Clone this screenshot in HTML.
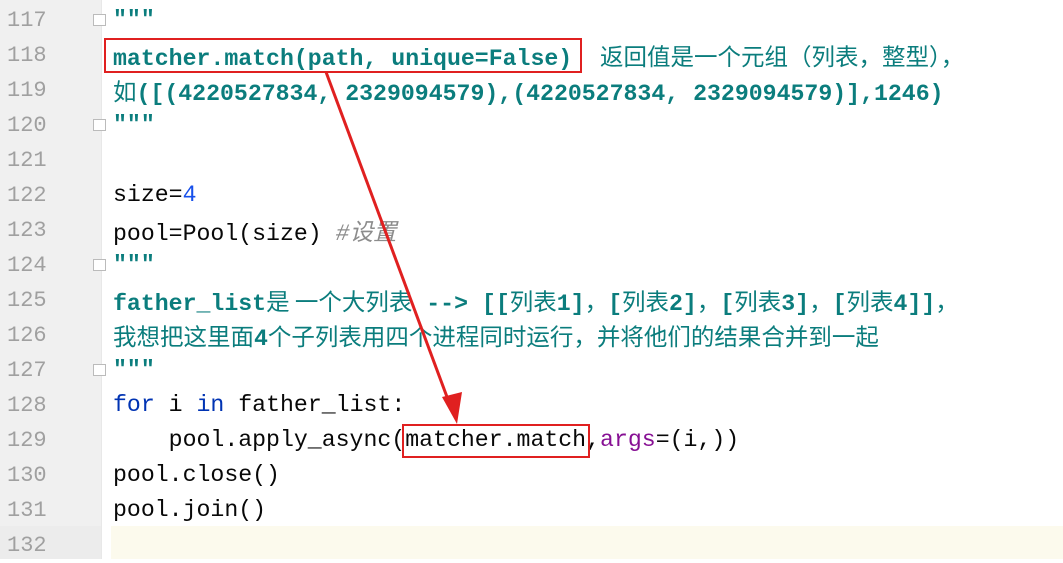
<!DOCTYPE html><html><head><meta charset="utf-8"><style>
body{margin:0;width:1063px;height:559px;overflow:hidden;background:#fff;position:relative;font-family:"Liberation Mono","Noto Sans CJK SC",monospace;}
.g{position:absolute;left:0;top:0;width:101px;height:559px;background:#f0f0f0;border-right:1px solid #e8e8e8;}
.hl{position:absolute;left:111px;top:526px;width:952px;height:33px;background:#fcfaed;}
.gh{position:absolute;left:0;top:526px;width:101px;height:33px;background:#ececec;}
.ln{position:absolute;left:7px;font-size:22px;color:#a0a0a0;height:35px;line-height:35px;margin-top:2px}
.c{position:absolute;left:113px;font-size:23.2px;height:35px;line-height:35px;white-space:pre;color:#080808;margin-top:2px}
.d{color:#0b7d7d;font-weight:bold}
.z{font-family:"Noto Sans CJK SC",sans-serif;font-weight:normal;font-size:23.5px}
.k{color:#0033b3}.n{color:#1750eb}.p{color:#871094}.cm{color:#8c8c8c;font-style:italic}
.f{position:absolute;left:93px;width:11px;height:10px;border:1px solid #bbb;background:#fff;}
.box{position:absolute;border:2px solid #e02020;}
</style></head><body>
<div class="g"></div><div class="gh"></div><div class="hl"></div>
<div class="ln" style="top:1px">117</div><div class="ln" style="top:36px">118</div><div class="ln" style="top:71px">119</div><div class="ln" style="top:106px">120</div><div class="ln" style="top:141px">121</div><div class="ln" style="top:176px">122</div><div class="ln" style="top:211px">123</div><div class="ln" style="top:246px">124</div><div class="ln" style="top:281px">125</div><div class="ln" style="top:316px">126</div><div class="ln" style="top:351px">127</div><div class="ln" style="top:386px">128</div><div class="ln" style="top:421px">129</div><div class="ln" style="top:456px">130</div><div class="ln" style="top:491px">131</div><div class="ln" style="top:526px">132</div>
<div class="f" style="top:14px"></div><div class="f" style="top:119px"></div><div class="f" style="top:259px"></div><div class="f" style="top:364px"></div>
<div class="c d" style="top:1px">"""</div>
<div class="c d" style="top:36px">matcher.match(path, unique=False)  <span class="z">返回值是一个元组（列表，整型），</span></div>
<div class="c d" style="top:71px"><span class="z">如</span>([(4220527834, 2329094579),(4220527834, 2329094579)],1246)</div>
<div class="c d" style="top:106px">"""</div>
<div class="c" style="top:176px">size=<span class="n">4</span></div>
<div class="c" style="top:211px">pool=Pool(size) <span class="cm">#<span class="z" style="font-style:italic">设置</span></span></div>
<div class="c d" style="top:246px">"""</div>
<div class="c d" style="top:281px">father_list<span class="z">是 一个大列表</span> --> [[<span class="z">列表</span>1]<span class="z">，</span>[<span class="z">列表</span>2]<span class="z">，</span>[<span class="z">列表</span>3]<span class="z">，</span>[<span class="z">列表</span>4]]<span class="z">，</span></div>
<div class="c d" style="top:316px"><span class="z">我想把这里面</span>4<span class="z">个子列表用四个进程同时运行，并将他们的结果合并到一起</span></div>
<div class="c d" style="top:351px">"""</div>
<div class="c" style="top:386px"><span class="k">for</span> i <span class="k">in</span> father_list:</div>
<div class="c" style="top:421px">    pool.apply_async(matcher.match,<span class="p">args</span>=(i,))</div>
<div class="c" style="top:456px">pool.close()</div>
<div class="c" style="top:491px">pool.join()</div>
<div class="box" style="left:104px;top:38px;width:474px;height:31px"></div>
<div class="box" style="left:402px;top:424px;width:184px;height:30px"></div>
<svg style="position:absolute;left:0;top:0" width="1063" height="559"><line x1="326" y1="72" x2="450" y2="405" stroke="#e02020" stroke-width="3"/><polygon points="457,424 442,397 462,392" fill="#e02020"/></svg>
</body></html>
